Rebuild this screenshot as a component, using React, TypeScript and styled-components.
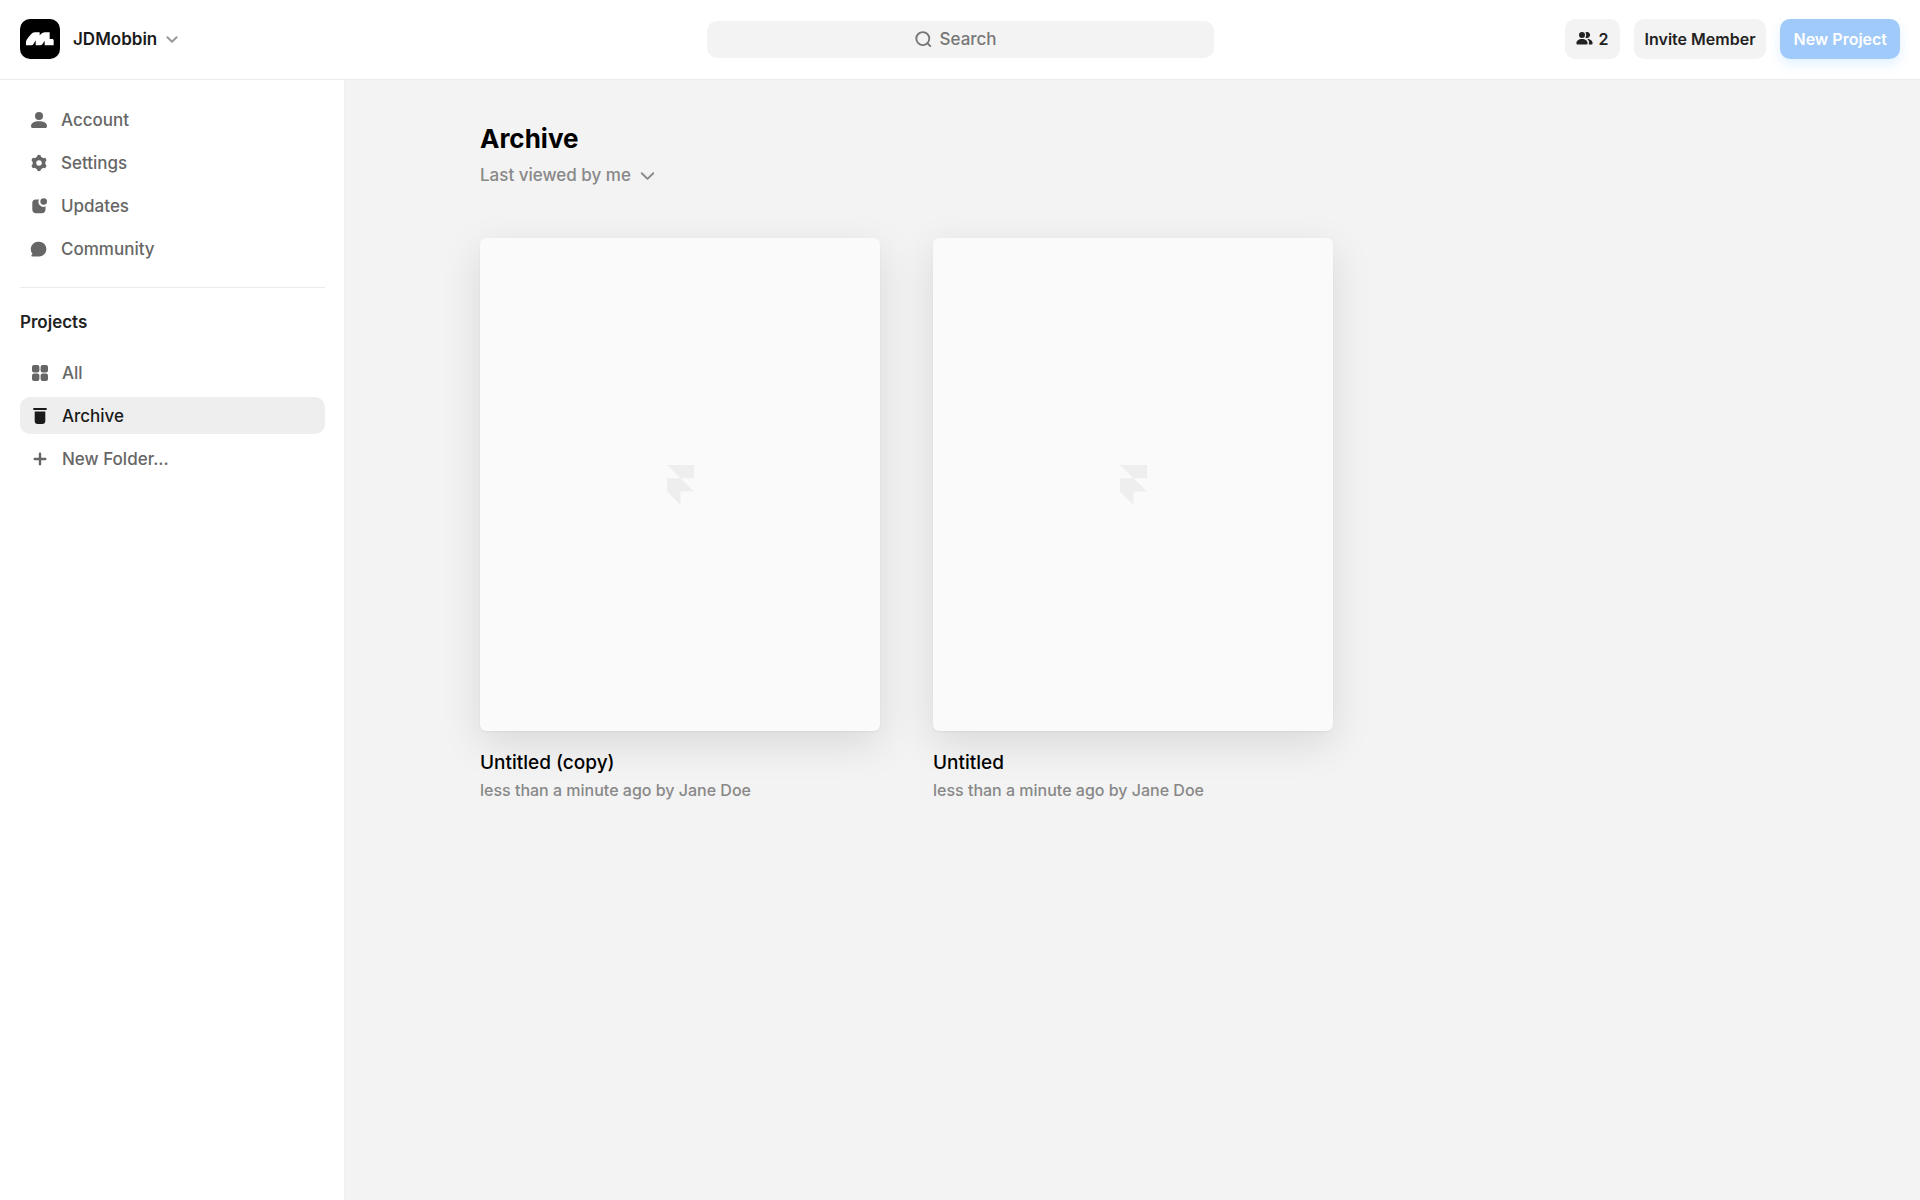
import React from "react";
import styled, { createGlobalStyle } from "styled-components";

const GlobalStyle = createGlobalStyle`
  *, *::before, *::after { box-sizing: border-box; }
  body {
    margin: 0;
    background: #f3f3f3;
    color: #222;
    font-family: Inter, "Liberation Sans", sans-serif;
    font-size: 17px;
    font-weight: 500;
    -webkit-font-smoothing: antialiased;
  }
  button, input, select { font: inherit; color: inherit; }
`;

const Page = styled.div`
  display: flex;
  flex-direction: column;
  min-height: 100vh;
`;

const Header = styled.header`
  display: grid;
  grid-template-columns: 1fr minmax(200px, 507px) 1fr;
  align-items: center;
  height: 80px;
  padding: 0 20px 1px;
  background: #fff;
  border-bottom: 1px solid #ebebeb;
`;

const Workspace = styled.button`
  justify-self: start;
  display: flex;
  align-items: center;
  padding: 0;
  border: 0;
  background: none;
  font-size: 17px;
  font-weight: 600;
  color: #1a1a1a;
  cursor: pointer;
`;

const WorkspaceName = styled.span`
  margin: 0 9px 0 13px;
`;

const SearchField = styled.label`
  display: flex;
  align-items: center;
  justify-content: center;
  gap: 8px;
  height: 37px;
  border-radius: 10px;
  background: #f3f3f3;
  color: #777;
  cursor: text;
`;

const SearchInput = styled.input`
  width: 66px;
  padding: 0;
  border: 0;
  outline: 0;
  background: none;
  font-size: 17px;
  &::placeholder { color: #777; opacity: 1; }
`;

const Actions = styled.div`
  justify-self: end;
  display: flex;
  gap: 14px;
`;

const Button = styled.button<{ $primary?: boolean }>`
  display: flex;
  align-items: center;
  gap: 6px;
  height: 40px;
  padding: ${(p) => (p.$primary ? "0 13px" : "0 11px 1px")};
  border: 0;
  border-radius: 10px;
  background: ${(p) => (p.$primary ? "#a0cafa" : "#f3f3f3")};
  box-shadow: ${(p) => (p.$primary ? "0 5px 12px rgba(0, 136, 255, 0.12)" : "none")};
  color: ${(p) => (p.$primary ? "#fff" : "#222")};
  font-size: 16px;
  font-weight: 600;
  white-space: nowrap;
  cursor: pointer;
`;

const Body = styled.div`
  display: flex;
  flex: 1;
`;

const Sidebar = styled.aside`
  flex: 0 0 345px;
  padding: 21px 19px 0 20px;
  background: #fff;
  border-right: 1px solid #f0f0f0;
`;

const NavList = styled.ul<{ $inset: number }>`
  display: flex;
  flex-direction: column;
  gap: 6px;
  margin: 0;
  padding: 0;
  list-style: none;
  a { padding-left: ${(p) => p.$inset}px; }
`;

const NavLink = styled.a<{ $active?: boolean }>`
  display: flex;
  align-items: center;
  gap: 14px;
  height: 37px;
  border-radius: 10px;
  background: ${(p) => (p.$active ? "#eee" : "transparent")};
  color: ${(p) => (p.$active ? "#1a1a1a" : "#666")};
  text-decoration: none;
`;

const Divider = styled.hr`
  height: 1px;
  margin: 20px 0 23px;
  border: 0;
  background: #ebebeb;
`;

const SectionTitle = styled.h2`
  margin: 0 0 21px;
  font-size: 17px;
  font-weight: 600;
  line-height: 22px;
  color: #222;
`;

const Main = styled.main`
  flex: 1;
  min-width: 0;
  padding: 42px 134px 40px 135px;
`;

const Title = styled.h1`
  margin: 0;
  font-size: 26px;
  font-weight: 700;
  line-height: 34px;
  color: #000;
`;

const Sort = styled.label`
  display: inline-flex;
  align-items: center;
  gap: 9px;
  margin-top: 8px;
  height: 22px;
  color: #888;
`;

const SortSelect = styled.select`
  appearance: none;
  padding: 0;
  border: 0;
  outline: 0;
  background: none;
  font-size: 17px;
  cursor: pointer;
`;

const Grid = styled.div`
  display: grid;
  grid-template-columns: repeat(3, minmax(0, 1fr));
  gap: 53px;
  margin-top: 52px;
`;

const Thumb = styled.a`
  display: flex;
  align-items: center;
  justify-content: center;
  height: 493px;
  border-radius: 6px;
  background: #fafafa;
  box-shadow: 0 1px 2px rgba(0, 0, 0, 0.05), 0 12px 42px rgba(0, 0, 0, 0.11);
`;

const CardTitle = styled.h3`
  margin: 20px 0 0;
  font-size: 19px;
  font-weight: 500;
  line-height: 24px;
  color: #000;
`;

const CardMeta = styled.p`
  margin: 5px 0 0;
  font-size: 16px;
  line-height: 20px;
  color: #888;
`;

const Logo = () => (
  <svg width="40" height="40" viewBox="0 0 120 120" aria-hidden="true">
    <rect width="120" height="120" rx="30" fill="#000" />
    <path
      fill="#fff"
      d="M18 79V68Q19 62 33 46Q38 40 44 40H59V49Q66 40 74 40H89V60H98Q101 61 101 64V79H74V65L67 76Q65 79 61 79H47V64L40 76Q38 79 35 79Z"
    />
  </svg>
);

const Chevron = ({ size, color, weight }: { size: number; color: string; weight: number }) => (
  <svg width={size} height={size} viewBox="0 0 12 12" fill="none" stroke={color} strokeWidth={weight} strokeLinecap="round" strokeLinejoin="round" aria-hidden="true">
    <path d="M1.400 4.200 6 8.700l4.600-4.500" />
  </svg>
);

const SearchIcon = () => (
  <svg width="17" height="17" viewBox="0 0 17 17" fill="none" stroke="currentColor" strokeWidth="1.900" strokeLinecap="round" aria-hidden="true">
    <circle cx="7.800" cy="7.600" r="6.500" />
    <path d="m12.600 12.400 2.700 2.700" />
  </svg>
);

const icons: Record<string, React.ReactNode> = {
  account: (
    <>
      <circle cx="8" cy="4" r="4" />
      <path d="M0 14.200C0 11.200 3 9.300 8 9.300s8 1.900 8 4.900c0 1.100-.7 1.800-1.800 1.800H1.800C.7 16 0 15.300 0 14.200Z" />
    </>
  ),
  settings: (
    <g fill="none" stroke="currentColor">
      <circle cx="8" cy="8" r="4.600" strokeWidth="3.600" />
      <path
        d="M8 1.800v1M8 14.200v-1M2.630 4.900l.87.500M13.370 11.100l-.87-.500M2.630 11.100l.87-.500M13.370 4.900l-.87.500"
        strokeWidth="4"
        strokeLinecap="round"
      />
    </g>
  ),
  updates: (
    <>
      <circle cx="12.700" cy="3.500" r="3.300" />
      <path d="M4.600 1.500h3.500A4.900 4.900 0 0 0 14.500 8.300v3.200c0 2.400-1.400 3.800-3.800 3.800H5.100c-2.400 0-3.800-1.400-3.800-3.800V4.800c0-2 1.300-3.300 3.300-3.300Z" />
    </>
  ),
  community: <path d="M8 .7a7.400 7.400 0 1 1 0 14.800H1.300c-.9 0-1.200-.7-.7-1.400l.9-1.400A7.400 7.400 0 0 1 8 .7Z" />,
  all: (
    <>
      <rect x="0" y="0" width="7.400" height="7.400" rx="2" />
      <rect x="8.600" y="0" width="7.400" height="7.400" rx="2" />
      <rect x="0" y="8.600" width="7.400" height="7.400" rx="2" />
      <rect x="8.600" y="8.600" width="7.400" height="7.400" rx="2" />
    </>
  ),
  archive: (
    <>
      <rect x="1.300" y="0" width="13.400" height="2" rx=".6" />
      <path d="M2.700 3.500h10.600V13c0 2-1.100 3-3 3H5.700c-1.900 0-3-1-3-3Z" />
    </>
  ),
  folder: <path d="M2.700 8h10.600M8 2.700v10.600" fill="none" stroke="currentColor" strokeWidth="2.400" strokeLinecap="round" />,
};

const NavIcon = ({ name }: { name: string }) => (
  <svg width="16" height="16" viewBox="0 0 16 16" fill="currentColor" overflow="visible" aria-hidden="true">
    {icons[name]}
  </svg>
);

const PeopleIcon = () => (
  <svg width="17" height="13" viewBox="0 0 17 13" fill="currentColor" aria-hidden="true">
    <circle cx="6" cy="3.100" r="3" />
    <path d="M.4 11.300C.4 8.800 2.600 7.100 6 7.100s5.600 1.700 5.600 4.200c0 .8-.5 1.300-1.300 1.300H1.700c-.8 0-1.300-.5-1.300-1.300Z" />
    <path d="M9.300.600a3 3 0 1 1 0 5 4.200 4.200 0 0 0 0-5Z" />
    <path d="M11.300 7.100c3 0 5.300 1.700 5.300 4.200 0 .8-.5 1.300-1.300 1.300h-2.600c.9-2.200.2-4-1.400-5.500Z" />
  </svg>
);

const FrameMark = () => (
  <svg width="27" height="40" viewBox="0 0 27 40" fill="#eee" aria-hidden="true">
    <path d="M0 0h27v13.300H13.500ZM0 13.300h13.500L27 26.600H13.500V40L0 26.600Z" />
  </svg>
);

const menu = [
  { icon: "account", label: "Account" },
  { icon: "settings", label: "Settings" },
  { icon: "updates", label: "Updates" },
  { icon: "community", label: "Community" },
];

const folders = [
  { icon: "all", label: "All" },
  { icon: "archive", label: "Archive", active: true },
  { icon: "folder", label: "New Folder..." },
];

const projects = ["Untitled (copy)", "Untitled"];

const Nav = ({ items, inset }: { items: { icon: string; label: string; active?: boolean }[]; inset: number }) => (
  <NavList $inset={inset}>
    {items.map((item) => (
      <li key={item.label}>
        <NavLink href="#" $active={item.active} aria-current={item.active ? "page" : undefined}>
          <NavIcon name={item.icon} />
          {item.label}
        </NavLink>
      </li>
    ))}
  </NavList>
);

export default function App() {
  return (
    <Page>
      <GlobalStyle />
      <Header>
        <Workspace type="button">
          <Logo />
          <WorkspaceName>JDMobbin</WorkspaceName>
          <Chevron size={12} color="#999" weight={2} />
        </Workspace>
        <SearchField>
          <SearchIcon />
          <SearchInput type="text" placeholder="Search" aria-label="Search" />
        </SearchField>
        <Actions>
          <Button type="button" aria-label="2 members">
            <PeopleIcon />2
          </Button>
          <Button type="button">Invite Member</Button>
          <Button type="button" $primary>New Project</Button>
        </Actions>
      </Header>
      <Body>
        <Sidebar>
          <Nav items={menu} inset={11} />
          <Divider />
          <SectionTitle>Projects</SectionTitle>
          <Nav items={folders} inset={12} />
        </Sidebar>
        <Main>
          <Title>Archive</Title>
          <Sort>
            <SortSelect aria-label="Sort projects">
              <option>Last viewed by me</option>
            </SortSelect>
            <Chevron size={15} color="#888" weight={1.5} />
          </Sort>
          <Grid>
            {projects.map((name) => (
              <article key={name}>
                <Thumb href="#" aria-label={name}>
                  <FrameMark />
                </Thumb>
                <CardTitle>{name}</CardTitle>
                <CardMeta>less than a minute ago by Jane Doe</CardMeta>
              </article>
            ))}
          </Grid>
        </Main>
      </Body>
    </Page>
  );
}
